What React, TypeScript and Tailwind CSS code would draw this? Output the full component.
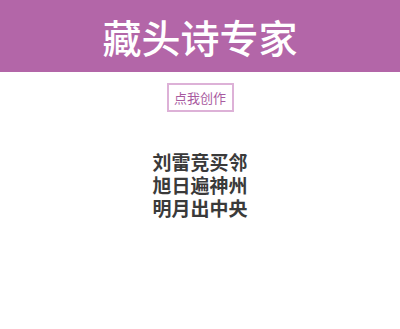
export default function App() {
  return (
    <div className="w-[400px] h-[329px] bg-white" style={{ fontFamily: '"Noto Sans CJK SC", "Noto Sans", sans-serif' }}>
      <div className="h-[72px] bg-[#b366a8] flex items-center justify-center">
        <h1 className="text-white text-[39px] leading-none font-medium">藏头诗专家</h1>
      </div>
      <div className="flex justify-center pt-[11px]">
        <div className="h-[29px] w-[67px] flex items-center justify-center border-2 border-[#c77dbd]/60 text-[#a85aa0] text-[13px] leading-none bg-white cursor-pointer">点我创作</div>
      </div>
      <div className="flex justify-center pt-[38px]">
        <div className="text-[19px] leading-[23px] font-semibold text-[#3a3a3a] text-left">
          <div>刘雷竞买邻</div>
          <div>旭日遍神州</div>
          <div>明月出中央</div>
        </div>
      </div>
    </div>
  );
}
